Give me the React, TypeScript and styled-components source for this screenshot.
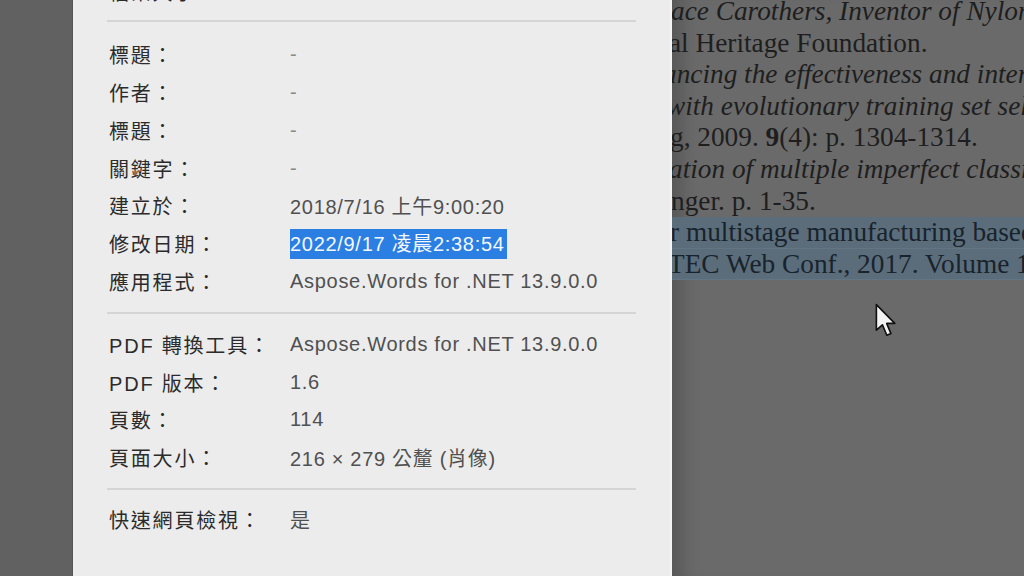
import styled, { createGlobalStyle } from "styled-components";

type Prop = {
  label: string;
  value: string;
  selected?: boolean;
  dim?: boolean;
};

type PageLine = {
  text: React.ReactNode;
  italic?: boolean;
  marked?: boolean;
  shift?: number;
};

const sections: { pad: string; rows: Prop[] }[] = [
  { pad: "12px 0 9px", rows: [{ label: "檔案大小：", value: "2.53 MB" }] },
  {
    pad: "14px 0 12px",
    rows: [
      { label: "標題：", value: "-", dim: true },
      { label: "作者：", value: "-", dim: true },
      { label: "標題：", value: "-", dim: true },
      { label: "關鍵字：", value: "-", dim: true },
      { label: "建立於：", value: "2018/7/16 上午9:00:20" },
      { label: "修改日期：", value: "2022/9/17 凌晨2:38:54", selected: true },
      { label: "應用程式：", value: "Aspose.Words for .NET 13.9.0.0" },
    ],
  },
  {
    pad: "11px 0",
    rows: [
      { label: "PDF 轉換工具：", value: "Aspose.Words for .NET 13.9.0.0" },
      { label: "PDF 版本：", value: "1.6" },
      { label: "頁數：", value: "114" },
      { label: "頁面大小：", value: "216 × 279 公釐 (肖像)" },
    ],
  },
  { pad: "11px 0", rows: [{ label: "快速網頁檢視：", value: "是" }] },
];

const lines: PageLine[] = [
  { text: "ace Carothers, Inventor of Nylon", italic: true, shift: -1 },
  { text: "al Heritage Foundation.", shift: -3 },
  { text: "ancing the effectiveness and interp", italic: true, shift: -9 },
  { text: "with evolutionary training set selec", italic: true, shift: -5 },
  {
    text: (
      <>
        g, 2009. <b>9</b>(4): p. 1304-1314.
      </>
    ),
    shift: -2,
  },
  { text: "ation of multiple imperfect classifi", italic: true, shift: -3 },
  { text: "nger. p. 1-35.", shift: -1 },
  { text: "r multistage manufacturing based", marked: true, shift: -2 },
  { text: "TEC Web Conf., 2017. Volume 1", marked: true, shift: -4 },
];

export default function App() {
  return (
    <>
      <GlobalStyle />
      <Screen>
        <Backdrop />
        <Dialog>
          <Scroll>
            {sections.map((section, i) => (
              <Section key={i} $pad={section.pad} $divided={i > 0}>
                {section.rows.map((row, j) => (
                  <Row key={j}>
                    <Label>{row.label}</Label>
                    <Value $dim={row.dim}>
                      {row.selected ? <Selected>{row.value}</Selected> : row.value}
                    </Value>
                  </Row>
                ))}
              </Section>
            ))}
          </Scroll>
        </Dialog>
        <PageView>
          <PageText>
            {lines.map((line, i) => (
              <Line key={i} $italic={line.italic} $marked={line.marked} $shift={line.shift ?? 0}>
                {line.text}
              </Line>
            ))}
          </PageText>
        </PageView>
        <Cursor width="22" height="35" viewBox="0 0 16 25">
          <path
            d="M1 1 L1 19.5 L5.4 15.6 L8.6 23.2 L11.6 22 L8.5 14.6 L14.4 14.6 Z"
            fill="#f4f4f4"
            stroke="#111"
            strokeWidth="1.2"
            strokeLinejoin="round"
          />
        </Cursor>
      </Screen>
    </>
  );
}

const GlobalStyle = createGlobalStyle`
  html, body {
    margin: 0;
    padding: 0;
    background: #606060;
    overflow: hidden;
  }
`;

const Screen = styled.div`
  position: relative;
  width: 1024px;
  height: 576px;
  display: grid;
  grid-template-columns: 73px 599px 1fr;
  overflow: hidden;
`;

const Backdrop = styled.div`
  background: #616161;
  border-right: 1px solid #555;
`;

const Dialog = styled.div`
  background: #ececec;
  border-right: 2px solid #f4f4f4;
  overflow: hidden;
  font-family: "Liberation Sans", "Noto Sans CJK TC", sans-serif;
`;

const Scroll = styled.div`
  margin-top: -39px;
  padding: 0 34px 0 34px;
`;

const Section = styled.div<{ $pad: string; $divided: boolean }>`
  padding: ${(p) => p.$pad};
  border-top: ${(p) => (p.$divided ? "2px solid #d5d5d5" : "none")};
`;

const Row = styled.div`
  display: grid;
  grid-template-columns: 181px 1fr;
  align-items: center;
  height: 37.8px;
  padding-left: 2px;
  white-space: nowrap;
`;

const Label = styled.div`
  font-size: 20px;
  letter-spacing: 1.8px;
  color: #2b2b2b;
`;

const Value = styled.div<{ $dim?: boolean }>`
  font-size: 20px;
  letter-spacing: 0.7px;
  color: ${(p) => (p.$dim ? "#8a8a8a" : "#505050")};
`;

const Selected = styled.span`
  display: inline-block;
  line-height: 30px;
  padding-right: 2px;
  background: #2b7ee2;
  color: #f4f8ff;
`;

const PageView = styled.div`
  background: #6a6a6a;
  overflow: hidden;
  box-shadow: inset 22px 0 18px -12px rgba(0, 0, 0, 0.18);
`;

const PageText = styled.div`
  margin-top: -4px;
  font-family: "Liberation Serif", serif;
  font-size: 27.3px;
  color: #1e1e1e;
`;

const Line = styled.div<{ $italic?: boolean; $marked?: boolean; $shift: number }>`
  height: 31.6px;
  line-height: 31.6px;
  white-space: nowrap;
  text-indent: ${(p) => p.$shift}px;
  font-style: ${(p) => (p.$italic ? "italic" : "normal")};
  background: ${(p) => (p.$marked ? "#5b6d7b" : "transparent")};
  color: ${(p) => (p.$marked ? "#18232c" : "#1e1e1e")};
  box-shadow: ${(p) => (p.$marked ? "inset 0 -1px 0 #637583" : "none")};

  b {
    font-weight: bold;
  }
`;

const Cursor = styled.svg`
  position: absolute;
  left: 875px;
  top: 303px;
`;
